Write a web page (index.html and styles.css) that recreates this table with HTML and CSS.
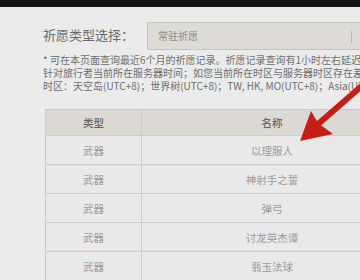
FILE: index.html
```html
<!DOCTYPE html>
<html lang="zh">
<head>
<meta charset="utf-8">
<link rel="stylesheet" href="styles.css">
</head>
<body>
<div class="topbar"></div>
<main class="page">
  <div class="filter">
    <span class="filter-label">祈愿类型选择：</span>
    <div class="select">
      <span class="select-text">常驻祈愿</span>
      <span class="select-divider"></span>
    </div>
  </div>
  <p class="note">* 可在本页面查询最近6个月的祈愿记录。祈愿记录查询有1小时左右延迟，如有疑问<br>针对旅行者当前所在服务器时间；如您当前所在时区与服务器时区存在差异，<br>时区：天空岛(UTC+8)；世界树(UTC+8)；TW, HK, MO(UTC+8)；Asia(UTC+8)；</p>
  <table class="records">
    <thead>
      <tr><th class="col-type">类型</th><th class="col-name">名称</th></tr>
    </thead>
    <tbody>
      <tr><td>武器</td><td>以理服人</td></tr>
      <tr><td>武器</td><td>神射手之誓</td></tr>
      <tr><td>武器</td><td>弹弓</td></tr>
      <tr><td>武器</td><td>讨龙英杰谭</td></tr>
      <tr><td>武器</td><td>翡玉法球</td></tr>
    </tbody>
  </table>
</main>
<svg class="arrow" width="360" height="280" viewBox="0 0 360 280">
  <line x1="317" y1="125" x2="372" y2="77" stroke="#c61f17" stroke-width="6"/>
  <polygon points="300,141 311,111 318,123 333,134" fill="#c61f17"/>
</svg>
</body>
</html>
```
FILE: styles.css
```css
html, body {
  margin: 0;
  padding: 0;
}
body {
  width: 360px;
  height: 280px;
  overflow: hidden;
  background: #ebebeb;
  font-family: "Noto Sans CJK SC", "Noto Sans", sans-serif;
  position: relative;
}
.topbar {
  height: 7px;
  background: #141414;
}
.page {
  padding: 15px 0 0 43px;
  width: 420px;
}
.filter {
  display: flex;
  align-items: center;
  height: 28px;
}
.filter-label {
  font-size: 13px;
  line-height: 16px;
  color: #6a6a6a;
  width: 104px;
  white-space: nowrap;
  margin-top: -3px;
}
.select {
  flex: 1;
  height: 26px;
  background: #dedbd7;
  border: 1px solid #c6c3bf;
  border-radius: 2px;
  display: flex;
  align-items: center;
  padding-left: 10px;
  position: relative;
}
.select-text {
  font-size: 10px;
  color: #8a8a8a;
  margin-top: -1px;
}
.select-divider {
  position: absolute;
  left: 203px;
  top: 8px;
  width: 1px;
  height: 12px;
  background: #b5b5b5;
}
.note {
  margin: 3px 0 0 0;
  font-size: 10px;
  line-height: 13px;
  color: #6e6e6e;
  white-space: nowrap;
}
.records {
  margin: 17px 0 0 2px;
  border-collapse: collapse;
  width: 355px;
  table-layout: fixed;
}
.records th, .records td {
  border: 1px solid #cacaca;
  text-align: center;
  font-size: 10.5px;
  padding: 0;
}
.records th {
  background: #dcd8d4;
  color: #666;
  font-weight: 500;
  height: 25px;
}
.records td {
  background: #e9e9e9;
  color: #9a9a9a;
  height: 28px;
}
.col-type { width: 95px; }
.col-name { width: 260px; }
.arrow {
  position: absolute;
  left: 0;
  top: 0;
}
```
